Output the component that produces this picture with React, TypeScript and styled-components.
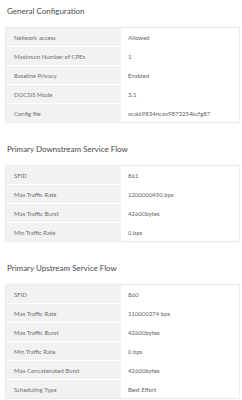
import React from 'react';
import styled, { createGlobalStyle } from 'styled-components';

const GlobalStyle = createGlobalStyle`
  body {
    margin: 0;
    background: #ffffff;
    font-family: Lato, 'Liberation Sans', sans-serif;
  }
`;

const StyledPage = styled.div`
  width: 242px;
  padding: 0 2px 0 5px;
  box-sizing: border-box;
`;

const StyledSection = styled.section`
  margin-bottom: 15px;
`;

const StyledTitle = styled.h2`
  margin: 0 0 5px 2px;
  height: 22px;
  line-height: 22px;
  font-size: 8px;
  font-weight: 400;
  color: #4a4a4a;
`;

const StyledTable = styled.div`
  border: 1px solid #ededed;
  box-shadow: 0 0 2px rgba(0, 0, 0, 0.04);
`;

const StyledRow = styled.div`
  display: grid;
  grid-template-columns: 115px 1fr;
  height: 19px;
  border-top: 1px solid #ffffff;
  box-sizing: border-box;

  &:first-child {
    border-top: none;
    height: 18px;
  }
`;

const StyledLabel = styled.div`
  background: #f2f2f2;
  padding-left: 8px;
  display: flex;
  align-items: center;
  font-size: 6px;
  color: #6f6f6f;
`;

const StyledValue = styled.div`
  background: #ffffff;
  padding-left: 7px;
  display: flex;
  align-items: center;
  font-size: 6px;
  color: #5f5f5f;
`;

type Row = [string, string];

const sections: { title: string; rows: Row[] }[] = [
  {
    title: 'General Configuration',
    rows: [
      ['Network access', 'Allowed'],
      ['Maximum Number of CPEs', '1'],
      ['Baseline Privacy', 'Enabled'],
      ['DOCSIS Mode', '3.1'],
      ['Config file', 'vcai69834ncxv9873254kcfg87'],
    ],
  },
  {
    title: 'Primary Downstream Service Flow',
    rows: [
      ['SFID', '861'],
      ['Max Traffic Rate', '1200000450 bps'],
      ['Max Traffic Burst', '42600bytes'],
      ['Min Traffic Rate', '0 bps'],
    ],
  },
  {
    title: 'Primary Upstream Service Flow',
    rows: [
      ['SFID', '860'],
      ['Max Traffic Rate', '110000274 bps'],
      ['Max Traffic Burst', '42600bytes'],
      ['Min Traffic Rate', '0 bps'],
      ['Max Concatenated Burst', '42600bytes'],
      ['Scheduling Type', 'Best Effort'],
    ],
  },
];

function App(): JSX.Element {
  return (
    <StyledPage>
      <GlobalStyle />
      {sections.map((section) => (
        <StyledSection key={section.title}>
          <StyledTitle>{section.title}</StyledTitle>
          <StyledTable>
            {section.rows.map(([label, value]) => (
              <StyledRow key={label}>
                <StyledLabel>{label}</StyledLabel>
                <StyledValue>{value}</StyledValue>
              </StyledRow>
            ))}
          </StyledTable>
        </StyledSection>
      ))}
    </StyledPage>
  );
}

export default App;
